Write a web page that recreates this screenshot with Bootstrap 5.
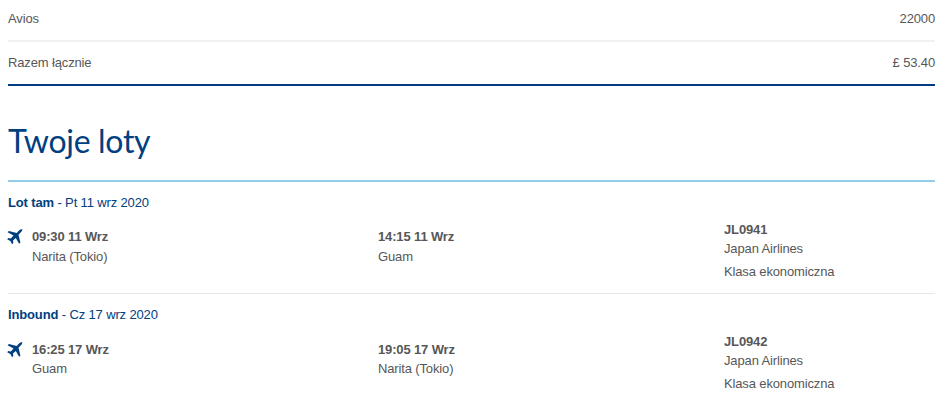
<!DOCTYPE html>
<html lang="pl">
<head>
<meta charset="utf-8">
<title>Twoje loty</title>
<link href="https://cdn.jsdelivr.net/npm/bootstrap@5.3.0/dist/css/bootstrap.min.css" rel="stylesheet">
<style>
html,body{background:#fff;}
body{font-family:"Liberation Sans",Arial,sans-serif;font-size:13px;color:#575757;line-height:18px;overflow:hidden;letter-spacing:-.14px;}
.page-wrap{padding:0 8px;}
.sum-row{height:42px;padding-top:10px;border-bottom:2px solid #f1f1f1;}
.sum-row-total{height:44px;padding-top:12px;border-bottom:2px solid #003a80;}
.flights-title{font-family:Lato,sans-serif;font-weight:400;font-size:32px;letter-spacing:-.3px;line-height:42px;color:#00407f;margin:34px 0 18px;height:42px;}
.flights-list{border-top:2px solid #94cfe9;}
.leg{height:112px;padding-top:12px;border-bottom:1px solid #e8e8e8;}
.leg-title{color:#00407f;margin-bottom:16px;}
.leg-title b{font-weight:700;}
.leg-last .leg-title{margin-bottom:17px;}
.leg-last .line-2{margin-top:1px;}
.col-dep{width:370px;display:flex;}
.col-arr{width:346px;}
.plane{width:16px;height:16px;margin:1px 9px 0 -1px;flex:none;}
.t-strong{font-weight:700;}
.line-2{margin-top:2px;}
.col-op{margin-top:-7px;}
.col-op .line-2{margin-top:1px;}
.leg-last .col-op{margin-top:-8px;}
.line-3{margin-top:5px;}
</style>
</head>
<body>
<div class="page-wrap">
  <div class="sum-row d-flex justify-content-between"><span>Avios</span><span>22000</span></div>
  <div class="sum-row-total d-flex justify-content-between"><span>Razem łącznie</span><span>£ 53.40</span></div>
  <h1 class="flights-title">Twoje loty</h1>
  <div class="flights-list">
    <div class="leg">
      <div class="leg-title"><b>Lot tam</b> - Pt 11 wrz 2020</div>
      <div class="d-flex">
        <div class="col-dep">
          <svg class="plane" viewBox="0 0 16 16"><path fill="#00407f" d="M15.5.5c-.7-.7-2.2-.2-3.2.8L9.7 3.9 1.9 2 .6 3.3l5.9 3.3-2.7 2.8-2.5-.3L.2 10.2l3.1 1.9 1.9 3.1 1.1-1.1-.3-2.5 2.8-2.7 3.3 5.9 1.3-1.3-1.9-7.8 2.6-2.6c1-1 1.5-2.5.8-3.2z"/></svg>
          <div><div class="t-strong">09:30 11 Wrz</div><div class="line-2">Narita (Tokio)</div></div>
        </div>
        <div class="col-arr"><div class="t-strong">14:15 11 Wrz</div><div class="line-2">Guam</div></div>
        <div class="col-op"><div class="t-strong">JL0941</div><div class="line-2">Japan Airlines</div><div class="line-3">Klasa ekonomiczna</div></div>
      </div>
    </div>
    <div class="leg leg-last border-0">
      <div class="leg-title"><b>Inbound</b> - Cz 17 wrz 2020</div>
      <div class="d-flex">
        <div class="col-dep">
          <svg class="plane" viewBox="0 0 16 16"><path fill="#00407f" d="M15.5.5c-.7-.7-2.2-.2-3.2.8L9.7 3.9 1.9 2 .6 3.3l5.9 3.3-2.7 2.8-2.5-.3L.2 10.2l3.1 1.9 1.9 3.1 1.1-1.1-.3-2.5 2.8-2.7 3.3 5.9 1.3-1.3-1.9-7.8 2.6-2.6c1-1 1.5-2.5.8-3.2z"/></svg>
          <div><div class="t-strong">16:25 17 Wrz</div><div class="line-2">Guam</div></div>
        </div>
        <div class="col-arr"><div class="t-strong">19:05 17 Wrz</div><div class="line-2">Narita (Tokio)</div></div>
        <div class="col-op"><div class="t-strong">JL0942</div><div class="line-2">Japan Airlines</div><div class="line-3">Klasa ekonomiczna</div></div>
      </div>
    </div>
  </div>
</div>
<script src="https://cdn.jsdelivr.net/npm/bootstrap@5.3.0/dist/js/bootstrap.bundle.min.js"></script>
</body>
</html>
